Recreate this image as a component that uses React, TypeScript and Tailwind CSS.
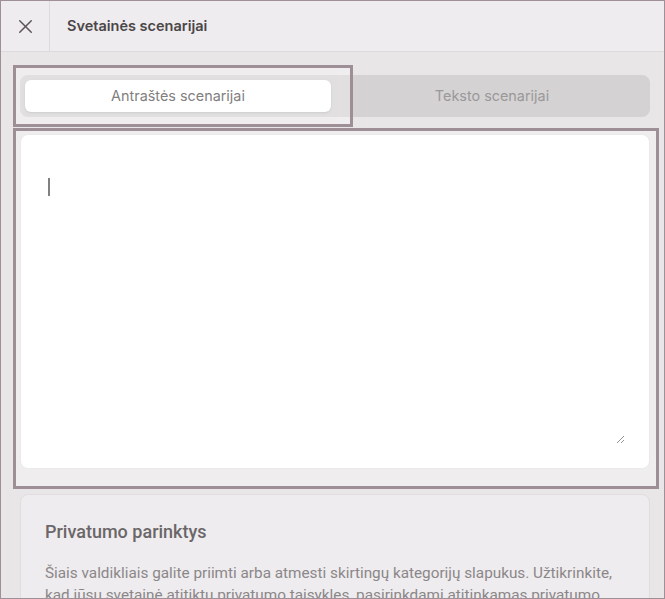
import { X } from 'lucide-react';

export default function App() {
  return (
    <div className="relative h-[599px] w-[665px] overflow-hidden border border-[#9e9096] bg-[#e8e6e7] font-['Inter',sans-serif]">
      {/* header */}
      <header className="flex h-[51px] items-stretch border-b border-[#dcdadb] bg-[#eeecee]">
        <button className="flex w-[49px] items-center justify-center border-r border-[#dcdadb] text-[#5a5558]">
          <X size={23} strokeWidth={1.5} />
        </button>
        <h1 className="flex items-center pl-[17px] text-[14.5px] font-semibold text-[#4b4648]">Svetainės scenarijai</h1>
      </header>

      <main className="pl-[19px] pr-[14px] pt-[23px]">
        {/* tabs */}
        <div className="flex h-[42px] gap-2 rounded-lg bg-[#d4d2d3] p-[5px]">
          <button className="flex-1 rounded-md bg-white text-[14.4px] text-[#4a4748] shadow-sm">Antraštės scenarijai</button>
          <button className="flex-1 rounded-md text-[14.4px] text-[#9b9899]">Teksto scenarijai</button>
        </div>

        {/* editor */}
        <div className="relative mt-[17px] h-[335px] rounded-lg border border-[#e3e1e2] bg-white p-6">
          <span className="absolute left-[27px] top-[43px] h-[18px] w-[1.5px] bg-[#4a4a4a]" />
          <textarea className="h-full w-full resize-y bg-transparent text-base outline-none" />
        </div>

        {/* privacy card */}
        <section className="mt-[25px] rounded-lg border border-[#dfdddf] bg-[#eeecee] pl-6 pr-3 pt-[23px] font-['Roboto',sans-serif]">
          <h2 className="text-[18px] font-medium text-[#6b6668]">Privatumo parinktys</h2>
          <p className="mt-[17px] text-[15.3px] leading-[22px] text-[#8b8789]">
            Šiais valdikliais galite priimti arba atmesti skirtingų kategorijų slapukus. Užtikrinkite, kad jūsų svetainė atitiktų privatumo taisykles, pasirinkdami atitinkamas privatumo nustatymus.
          </p>
        </section>
      </main>

      {/* highlight overlays */}
      <div className="pointer-events-none absolute left-[12px] top-[64px] h-[62px] w-[340px] border-[3px] border-[#9d8f95] bg-white/30" />
      <div className="pointer-events-none absolute left-[12px] top-[127px] h-[361px] w-[646px] border-[3px] border-[#9d8f95] bg-white/30" />
    </div>
  );
}
